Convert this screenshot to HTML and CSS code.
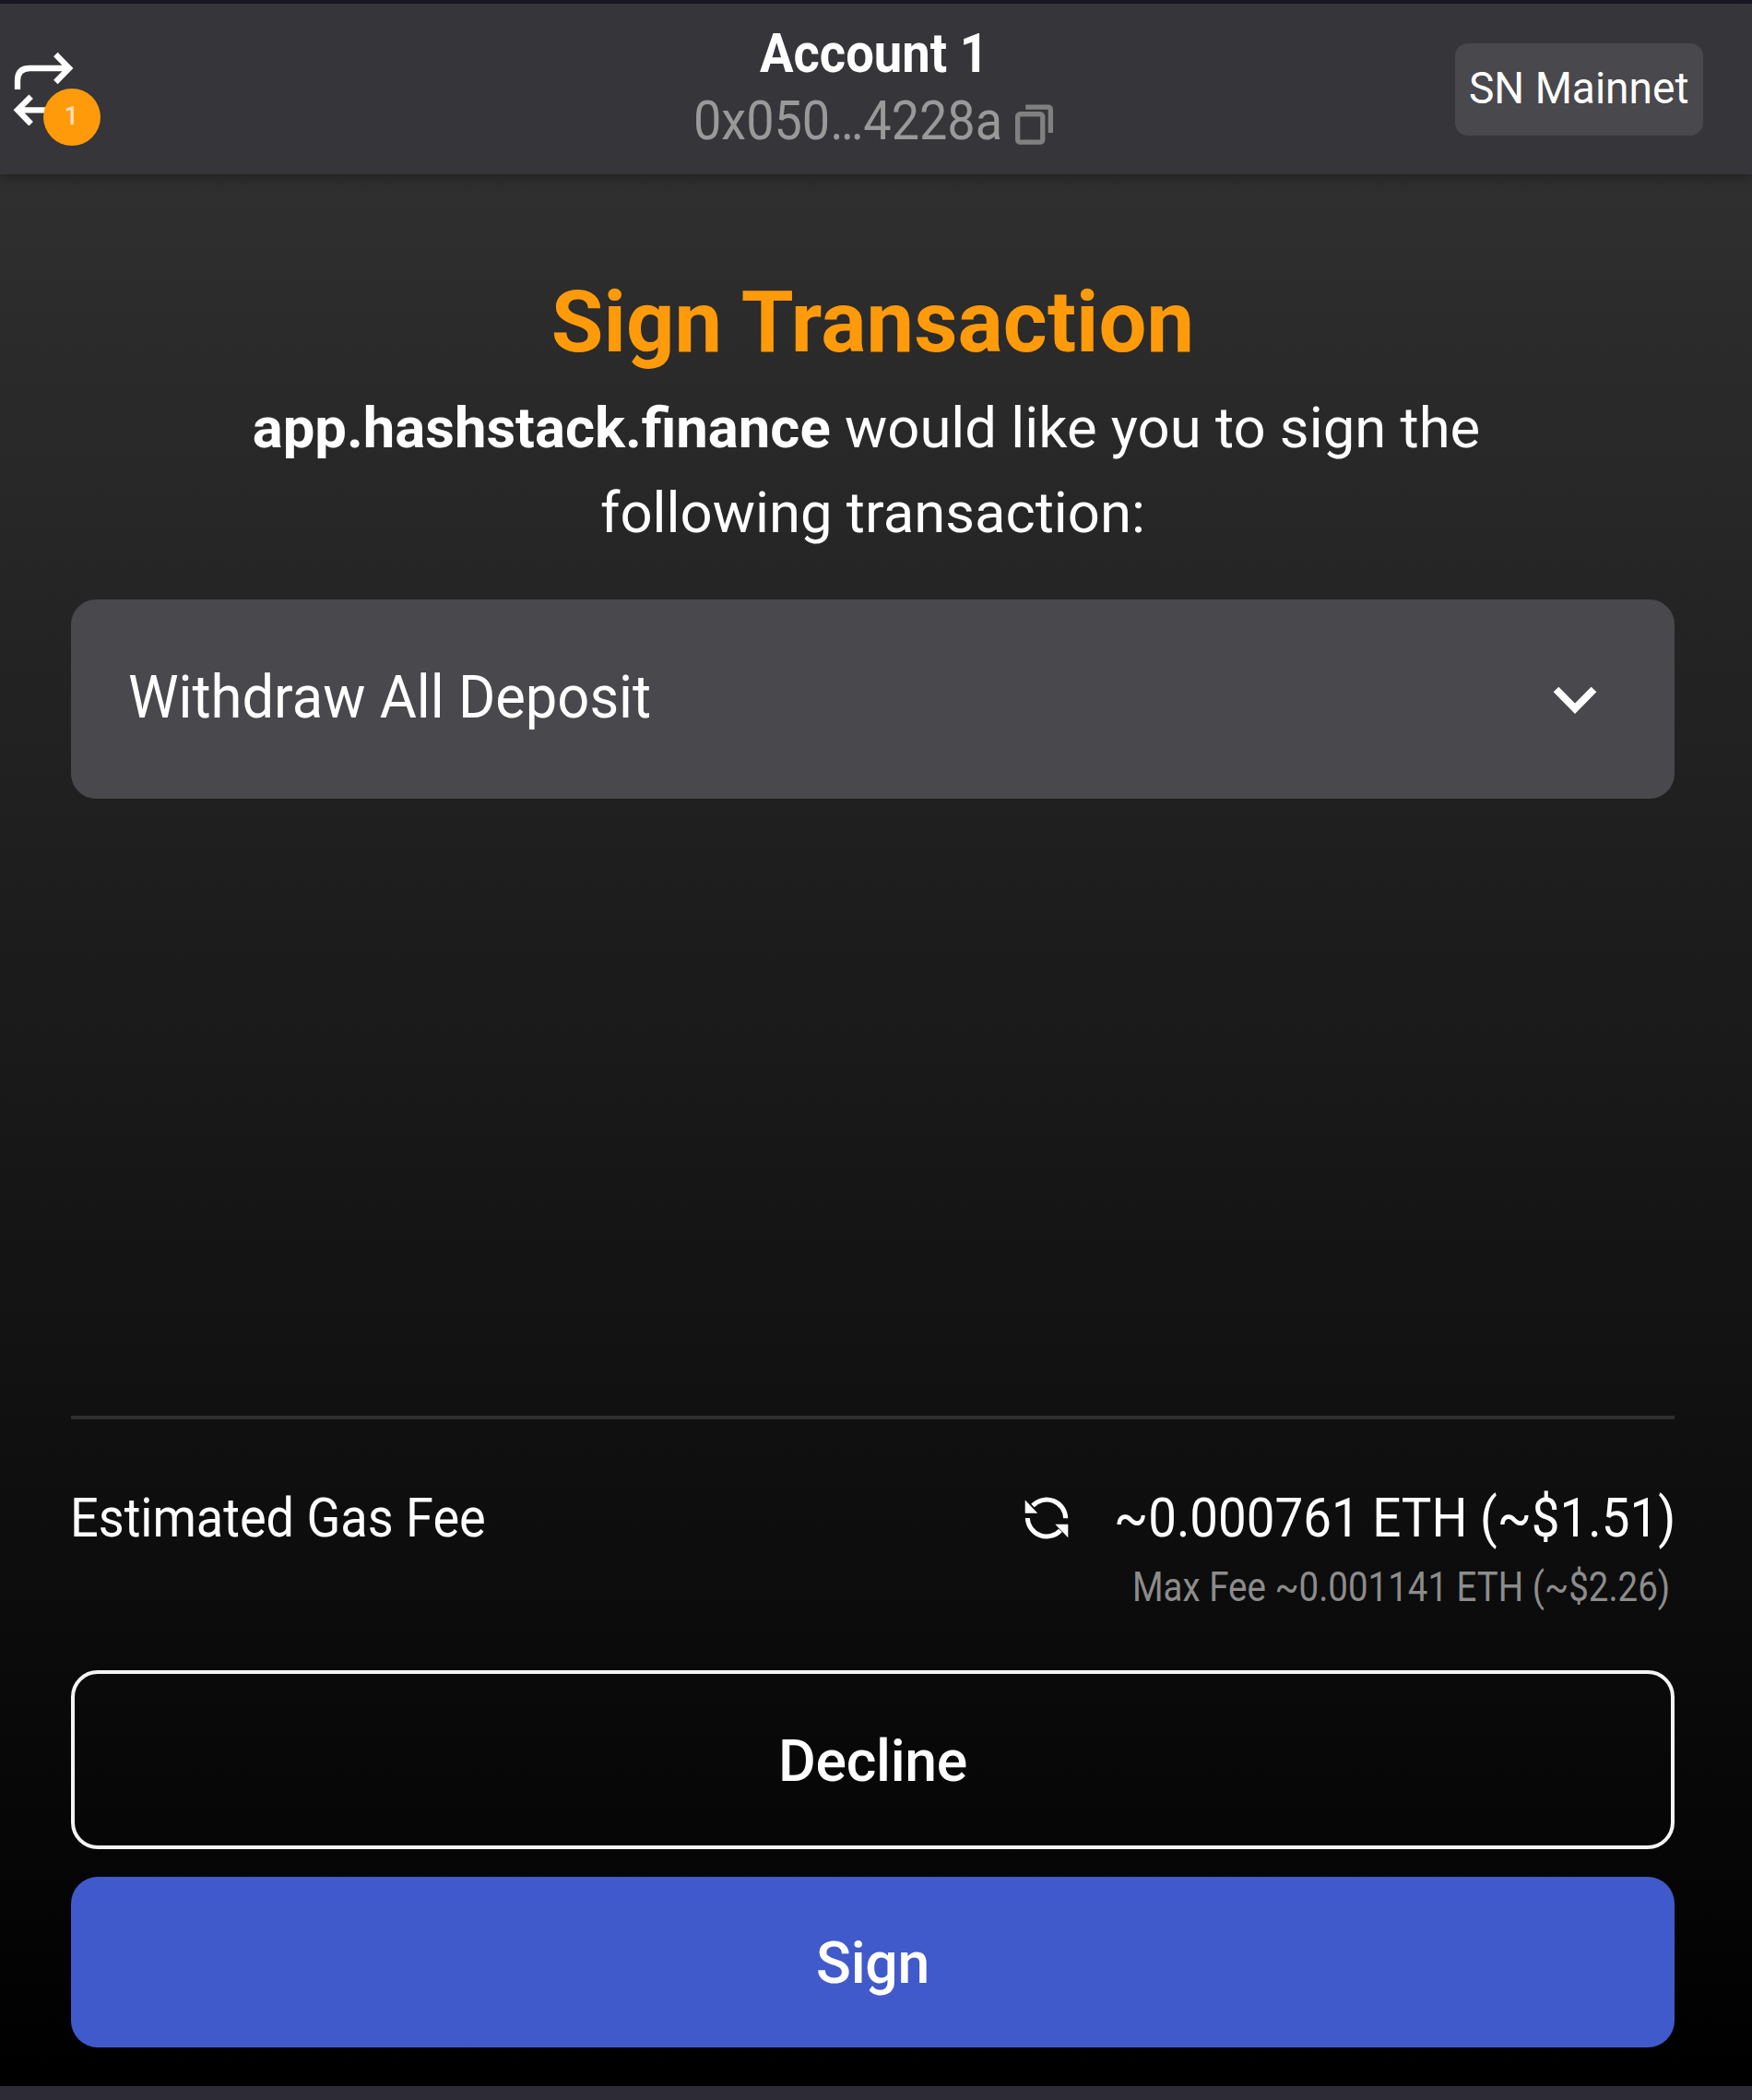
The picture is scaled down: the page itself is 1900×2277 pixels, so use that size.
FILE: index.html
```html
<!DOCTYPE html>
<html lang="en">
<head>
<meta charset="utf-8">
<title>Sign Transaction</title>
<link rel="stylesheet" href="styles.css">
</head>
<body>
<div class="popup">
  <header class="header">
    <div class="activity">
      <svg class="swap-icon" viewBox="42 168 198 240" fill="none" stroke="#fff" stroke-width="19">
        <path d="M57 291V262Q57 222 97 222H222M181 177L225 222L181 267"/>
        <path d="M160 358H60M101 314L57 358L101 403"/>
      </svg>
      <span class="badge">1</span>
    </div>
    <div class="account">
      <div class="account-name"><span class="fit fit-name">Account 1</span></div>
      <div class="address">
        <span class="fit fit-address">0x050&hellip;4228a</span>
        <svg class="copy-icon" viewBox="1110 336 130 138" fill="none" stroke="#808080" stroke-width="16">
          <path d="M1147 348H1220Q1229 348 1229 357V432"/>
          <rect x="1121" y="371" width="82" height="92" rx="8"/>
        </svg>
      </div>
    </div>
    <div class="network"><div class="network-pill"><span class="fit fit-network">SN Mainnet</span></div></div>
  </header>

  <main class="content">
    <h1 class="title">Sign Transaction</h1>
    <p class="intro">
      <span class="line line-first"><b>app.hashstack.finance</b> would like you to sign the</span>
      <span class="line">following transaction:</span>
    </p>
    <div class="card">
      <span class="fit fit-card">Withdraw All Deposit</span>
      <svg class="chevron" viewBox="0 0 48 30" fill="none" stroke="#fff" stroke-width="8"><path d="M3.5 3.5L24 24.3L44.5 3.5"/></svg>
    </div>

    <div class="fees">
      <div class="fee-row">
        <span class="fit fit-label">Estimated Gas Fee</span>
        <svg class="refresh" viewBox="0 0 48 50">
          <g fill="none" stroke="#fff" stroke-width="5"><path d="M44.7 25.2A20.7 20.7 0 0 0 9 11.5"/><path d="M3.3 25A20.7 20.7 0 0 0 39 38.5"/></g>
          <path fill="#fff" d="M.7 5.5V19.7H14.3ZM47.3 46.3V31.7H33.3Z"/>
        </svg>
        <span class="fit fit-amount">~0.000761 ETH (~$1.51)</span>
      </div>
      <div class="max-fee"><span class="fit fit-max">Max Fee ~0.001141 ETH (~$2.26)</span></div>
    </div>
    <button class="button decline">Decline</button>
    <button class="button sign">Sign</button>
  </main>
</div>
</body>
</html>
```
FILE: styles.css
```css
* { box-sizing: border-box; }

body { margin: 0; background: #000; }

.popup {
  display: flex;
  flex-direction: column;
  width: 1900px;
  height: 2277px;
  border-top: 4px solid #1a1926;
  border-bottom: 15px solid #2d2c36;
  background: linear-gradient(#2f2f2f 185px, #000 100%);
  color: #fff;
  font-family: Roboto, sans-serif;
  font-size: 60px;
}

svg { display: block; flex: none; }

/* Condensed text runs: the box has the final width, the glyphs are scaled into it. */
.fit {
  display: block;
  white-space: nowrap;
  transform-origin: left center;
}
.fit-name { width: 247px; transform: scaleX(.906); }
.fit-address { width: 335px; transform: scaleX(.9); }
.fit-network { width: 239px; transform: scaleX(.94); }
.fit-card { width: 568px; transform: scaleX(.9605); }
.fit-label { width: 451px; transform: scaleX(.901); }
.fit-amount { width: 609px; transform: scaleX(.911); }
.fit-max { width: 583px; transform: scaleX(.8745); }

.header {
  display: grid;
  grid-template-columns: 500px 1fr 500px;
  flex: none;
  height: 185px;
  padding-right: 6px;
  background: #363539;
  box-shadow: 0 2px 14px rgba(0, 0, 0, .35);
}

.activity { position: relative; padding: 52px 0 0 14px; }
.swap-icon { width: 66px; height: 80px; }
.badge {
  position: absolute;
  left: 46.5px;
  top: 92px;
  width: 62px;
  height: 62px;
  border-radius: 50%;
  background: #ff9b0b;
  color: #ffe0c0;
  font-size: 27px;
  font-weight: 500;
  line-height: 60px;
  text-align: center;
}

.account {
  display: flex;
  flex-direction: column;
  align-items: center;
  padding-top: 17px;
  line-height: 73px;
}
.account-name { font-weight: 700; }
.address { display: flex; gap: 13px; color: #999; }
.copy-icon { width: 43px; height: 46px; margin-top: 18px; }

.network { display: flex; justify-content: flex-end; padding: 43px 47.5px 0 0; }
.network-pill {
  width: 269px;
  height: 99.5px;
  padding-left: 15.5px;
  border-radius: 14px;
  background: #49484c;
  font-size: 49px;
  line-height: 98px;
}

.content {
  display: flex;
  flex: 1;
  flex-direction: column;
  padding: 107px 84px 42px 77px;
}

.title {
  margin: 0;
  color: #ff9b0b;
  font-size: 92px;
  font-weight: 700;
  letter-spacing: .1px;
  line-height: 108px;
  text-align: center;
}
.intro {
  margin: 14px 0 48px;
  font-size: 61.6px;
  line-height: 92px;
  text-align: center;
}
.line { display: block; }
.line-first { padding-right: 14px; }

.card {
  display: flex;
  align-items: center;
  justify-content: space-between;
  height: 216px;
  padding: 0 84px 3px 62px;
  border-radius: 27px;
  background: #49484c;
  font-size: 64px;
}
.chevron { width: 48px; height: 30px; margin-top: 5px; }

.fees {
  margin-top: auto;
  padding-top: 72px;
  border-top: 4px solid #2f2f2f;
}
.fee-row { display: flex; line-height: 70px; margin: 0 -1px; }
.refresh { width: 48px; height: 50px; margin: 10px 49px 0 auto; }
.max-fee {
  display: flex;
  justify-content: flex-end;
  margin: 14px 5px 64px 0;
  color: #8c8c8c;
  font-size: 44px;
  line-height: 52px;
}

.button {
  flex: none;
  border: 0;
  border-radius: 29px;
  padding: 0;
  color: #fff;
  font: 500 62.5px Roboto, sans-serif;
  letter-spacing: -.3px;
  text-align: center;
}
.decline {
  height: 194px;
  margin-bottom: 30px;
  padding-top: 2px;
  border: 4px solid #f4f4f4;
  background: transparent;
}
.sign { height: 185px; padding-top: 2px; background: #405acb; }
```
